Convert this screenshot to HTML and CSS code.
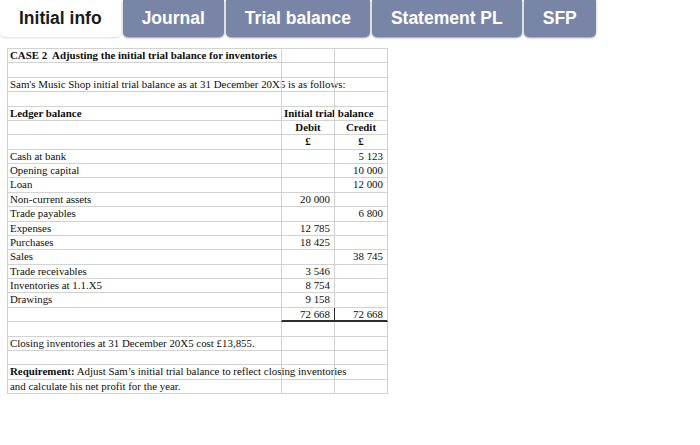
FILE: index.html
```html
<!DOCTYPE html>
<html>
<head>
<meta charset="utf-8">
<link rel="stylesheet" href="styles.css">
</head>
<body>
<nav class="tabs">
  <div class="tab active">Initial info</div>
  <div class="tab">Journal</div>
  <div class="tab">Trial balance</div>
  <div class="tab">Statement PL</div>
  <div class="tab">SFP</div>
</nav>
<div class="sheet">
  <div class="c txt b">CASE 2  Adjusting the initial trial balance for inventories</div><div class="c"></div><div class="c last"></div>
  <div class="c"></div><div class="c"></div><div class="c last"></div>
  <div class="c txt">Sam's Music Shop initial trial balance as at 31 December 20X5 is as follows:</div><div class="c"></div><div class="c last"></div>
  <div class="c"></div><div class="c"></div><div class="c last"></div>
  <div class="c txt b">Ledger balance</div><div class="c txt b">Initial trial balance</div><div class="c last"></div>
  <div class="c"></div><div class="c ctr b">Debit</div><div class="c last ctr b">Credit</div>
  <div class="c"></div><div class="c ctr b">£</div><div class="c last ctr b">£</div>
  <div class="c txt">Cash at bank</div><div class="c"></div><div class="c last num">5 123</div>
  <div class="c txt">Opening capital</div><div class="c"></div><div class="c last num">10 000</div>
  <div class="c txt">Loan</div><div class="c"></div><div class="c last num">12 000</div>
  <div class="c txt">Non-current assets</div><div class="c num">20 000</div><div class="c last"></div>
  <div class="c txt">Trade payables</div><div class="c"></div><div class="c last num">6 800</div>
  <div class="c txt">Expenses</div><div class="c num">12 785</div><div class="c last"></div>
  <div class="c txt">Purchases</div><div class="c num">18 425</div><div class="c last"></div>
  <div class="c txt">Sales</div><div class="c"></div><div class="c last num">38 745</div>
  <div class="c txt">Trade receivables</div><div class="c num">3 546</div><div class="c last"></div>
  <div class="c txt">Inventories at 1.1.X5</div><div class="c num">8 754</div><div class="c last"></div>
  <div class="c txt">Drawings</div><div class="c num">9 158</div><div class="c last"></div>
  <div class="c"></div><div class="c num total">72 668</div><div class="c last num total total-r">72 668</div>
  <div class="c"></div><div class="c"></div><div class="c last"></div>
  <div class="c txt">Closing inventories at 31 December 20X5 cost £13,855.</div><div class="c"></div><div class="c last"></div>
  <div class="c"></div><div class="c"></div><div class="c last"></div>
  <div class="c txt"><b>Requirement:</b> Adjust Sam’s initial trial balance to reflect closing inventories</div><div class="c"></div><div class="c last"></div>
  <div class="c txt">and calculate his net profit for the year.</div><div class="c"></div><div class="c last"></div>
</div>
</body>
</html>
```
FILE: styles.css
```css
html, body {
  margin: 0;
  padding: 0;
  background: #ffffff;
}

.tabs {
  display: flex;
  gap: 2px;
  height: 37px;
  font-family: "Liberation Sans", Arial, sans-serif;
  font-weight: bold;
  font-size: 17.5px;
}

.tab {
  height: 37px;
  padding: 0 19px;
  display: flex;
  align-items: center;
  color: #ffffff;
  background: #7885a7;
  border-radius: 0 0 5px 5px;
  box-shadow: 0 1px 2px rgba(0, 0, 0, 0.4);
  box-sizing: border-box;
}

.tab.active {
  background: #ffffff;
  color: #1a1a1a;
  box-shadow: 0 1px 2px rgba(0, 0, 0, 0.15);
}

.sheet {
  margin: 11px 0 0 7px;
  display: grid;
  grid-template-columns: 274px 53px 54px;
  grid-auto-rows: 14.375px;
  width: 381px;
  border-top: 1px solid #d2d2d2;
  font-family: "Liberation Serif", "Times New Roman", serif;
  font-size: 10.9px;
  color: #0e0e0e;
}

.c {
  box-sizing: border-box;
  border-left: 1px solid #d2d2d2;
  border-bottom: 1px solid #d2d2d2;
  line-height: 13.4px;
  white-space: pre;
  overflow: visible;
  padding: 0 2px;
}

.c.last {
  border-right: 1px solid #d2d2d2;
}

.b {
  font-weight: bold;
}

.num {
  text-align: right;
  padding-right: 4px;
}

.ctr {
  text-align: center;
}

.total {
  border-bottom: 2px solid #2e2e2e;
  line-height: 12.4px;
}

.total-r {
  border-left: 1.5px solid #2e2e2e;
  border-right: 1.5px solid #2e2e2e;
}
```
